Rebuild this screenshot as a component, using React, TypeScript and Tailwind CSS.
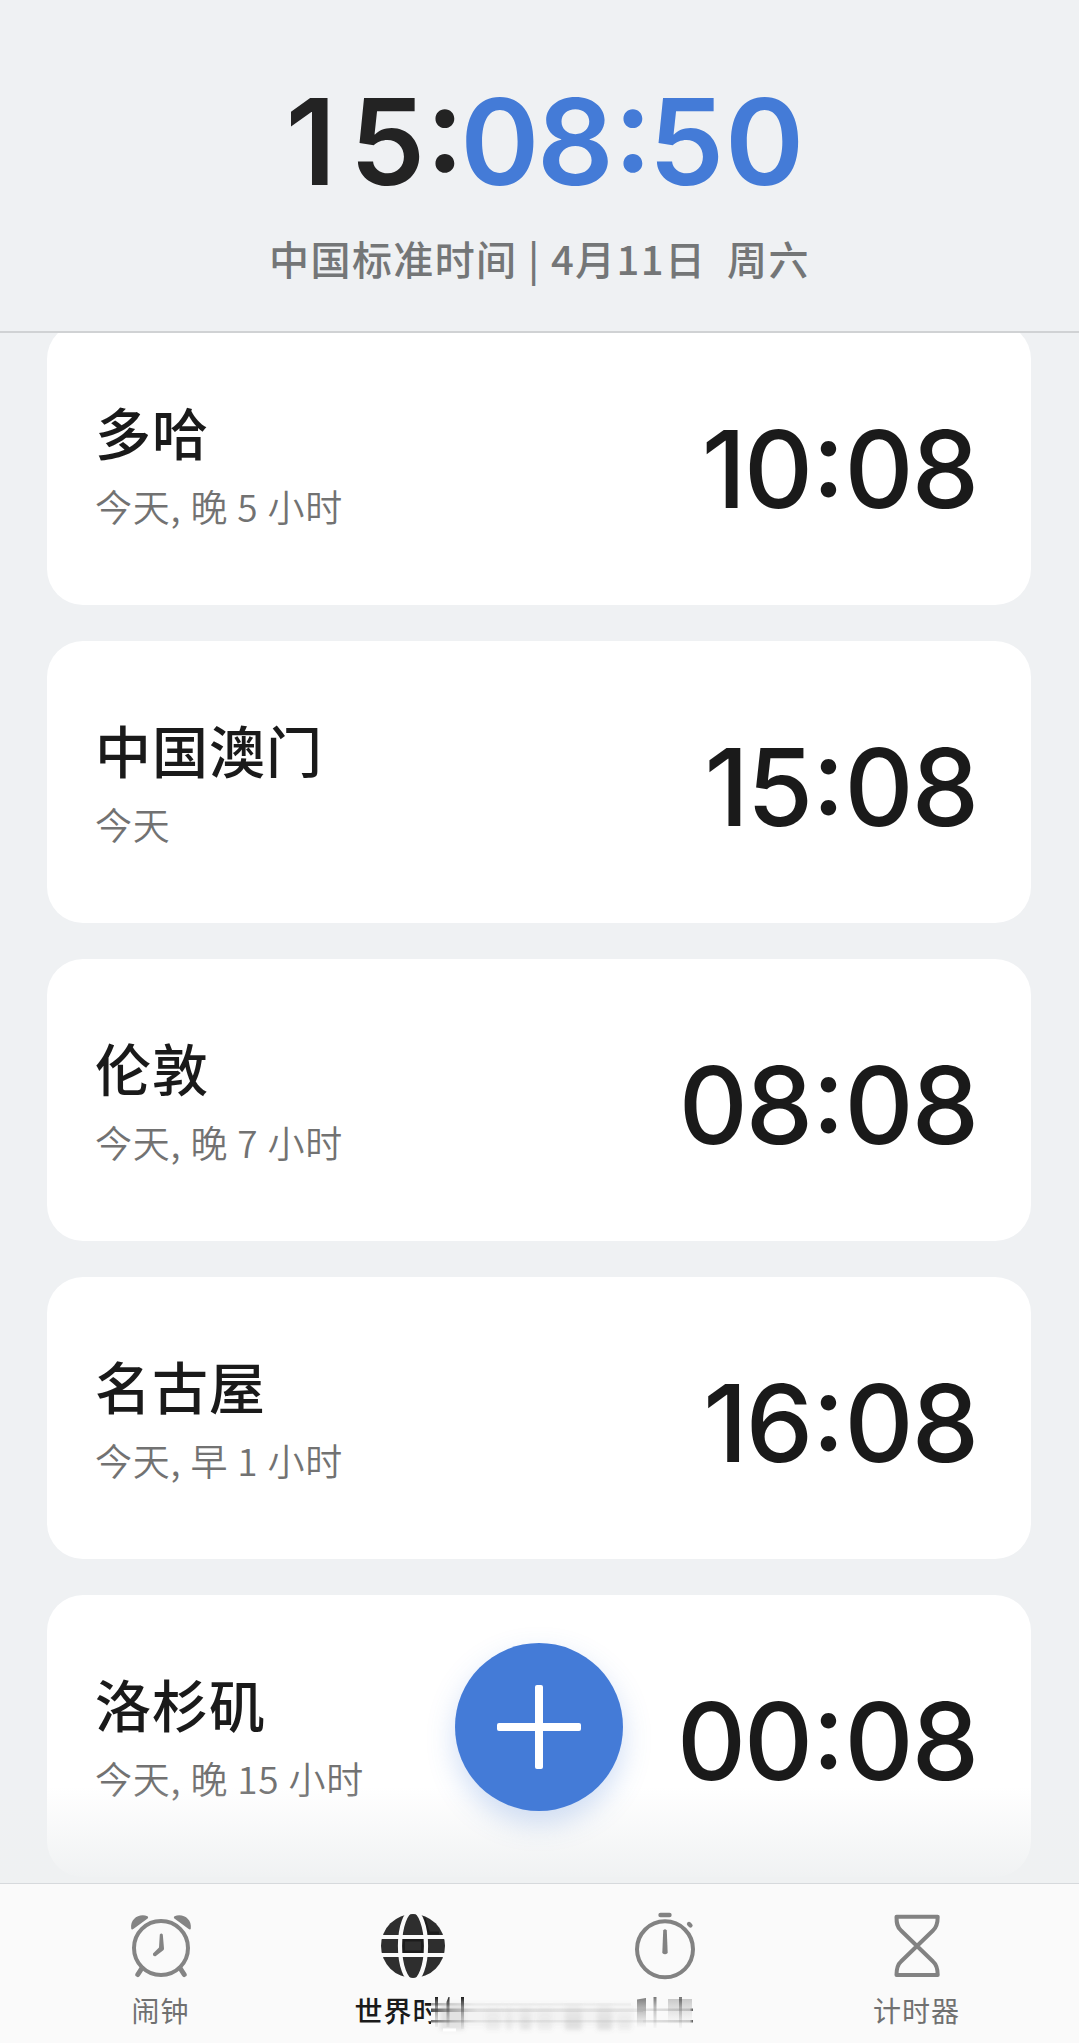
import React from 'react';

interface City {
  name: string;
  offset: string;
  time: string;
}

const CITIES: City[] = [
  { name: '多哈', offset: '今天, 晚 5 小时', time: '10:08' },
  { name: '中国澳门', offset: '今天', time: '15:08' },
  { name: '伦敦', offset: '今天, 晚 7 小时', time: '08:08' },
  { name: '名古屋', offset: '今天, 早 1 小时', time: '16:08' },
  { name: '洛杉矶', offset: '今天, 晚 15 小时', time: '00:08' },
];

function LiveClock({ value }: { value: string }) {
  return (
    <div className="flex pr-[5px] font-[Inter] text-[120px] leading-[120px] font-semibold">
      {value.split('').map((char, idx) => (
        <span
          key={idx}
          className={`text-center [font-feature-settings:'case'] ${char === ':' ? 'w-[34.5px]' : 'w-[76.7px]'} ${idx < 3 ? 'text-[#232323]' : 'text-[#447bd7]'}`}
        >
          {char}
        </span>
      ))}
    </div>
  );
}

function CityCard({ city }: { city: City }) {
  const [hour, minute] = city.time.split(':');
  return (
    <li className="flex h-[282px] shrink-0 items-center justify-between rounded-[36px] bg-white pr-[54px] pl-[48px]">
      <div className="flex flex-col pt-[1px]">
        <h2 className="text-[56px] leading-[72px] font-medium tracking-[1px] text-[#1a1a1a]">{city.name}</h2>
        <p className="mt-[11px] text-[37px] leading-[56px] font-[350] tracking-[0.8px] text-[#727272]">{city.offset}</p>
      </div>
      <div className="flex items-center pt-[10px] font-[Inter] text-[107px] leading-[110px] font-medium text-[#1a1a1a]">
        <span className="tracking-[-2px]">{hour}</span>
        <span className="ml-[1px] [font-feature-settings:'case']">:</span>
        <span className="tracking-[-2px]">{minute}</span>
      </div>
    </li>
  );
}

function AlarmIcon() {
  return (
    <svg width="72" height="72" viewBox="0 0 72 72" fill="none" stroke="#848484" strokeLinecap="round">
      <circle cx="36" cy="38" r="27" strokeWidth="4" />
      <path d="M34.800 24.500Q36.300 22.500 37.800 24.500L39 38.500Q39 39.800 38 40.600L30.500 46.200Q27.600 46.600 28 43.500L34 37.500Z" fill="#848484" stroke="none" />
      <path d="M17 58 12.800 64.500M55 58 59.200 64.500" strokeWidth="5" />
      <path d="M6.200 18.500C5 9 14 3 22.500 6.200 23.600 7 23.200 8.200 22.300 8.700L9 18.600C7.500 19.800 6.400 20 6.200 18.500ZM65.800 18.500C67 9 58 3 49.500 6.200 48.400 7 48.800 8.200 49.700 8.700L63 18.600C64.500 19.800 65.600 20 65.800 18.500Z" fill="#848484" stroke="none" />
    </svg>
  );
}

function GlobeIcon() {
  return (
    <svg width="72" height="72" viewBox="0 0 72 72" fill="none">
      <circle cx="36" cy="36" r="32" fill="#2e2e2e" />
      <rect x="26.500" y="30" width="19" height="12" stroke="#1c1c1c" strokeWidth="3" />
      <path d="M47 8 51.500 23 62 23" stroke="#1c1c1c" strokeWidth="3" />
      <path d="M3 27H69M3 45H69" stroke="#fafafa" strokeWidth="4" />
      <ellipse cx="36" cy="36" rx="13" ry="35" stroke="#fafafa" strokeWidth="4.200" />
    </svg>
  );
}

function StopwatchIcon() {
  return (
    <svg width="72" height="72" viewBox="0 0 72 72" fill="none" stroke="#828282" strokeLinecap="round">
      <circle cx="36" cy="39.300" r="28" strokeWidth="4" />
      <path d="M31.500 5H40.500" strokeWidth="4.400" />
      <path d="M60 14 61.500 15.500" strokeWidth="4.200" />
      <path d="M34.200 20.500Q36 18.200 37.800 20.500L38.700 43Q36 45.500 33.300 43Z" fill="#828282" stroke="none" />
    </svg>
  );
}

function HourglassIcon() {
  return (
    <svg width="72" height="72" viewBox="0 0 72 72" fill="none" stroke="#828282" strokeWidth="4" strokeLinejoin="round">
      <path d="M15.500 6.800H56.700C56.700 13 56 17 52 20.500L20 51.500C16 55 15.500 59 15.500 65H56.700C56.700 59 56 55 52 51.500L20 20.500C16 17 15.500 13 15.500 6.800Z" />
    </svg>
  );
}

// Smudge lying over the middle tab labels
function LabelSmudge() {
  return (
    <svg className="absolute top-[112px] left-[430px]" width="266" height="40" viewBox="0 0 266 40" fill="none">
      <defs>
        <linearGradient id="streak" x1="0" x2="1" y1="0" y2="0">
          <stop offset="0" stopColor="#222" stopOpacity="0.8" />
          <stop offset="0.1" stopColor="#444" stopOpacity="0.35" />
          <stop offset="0.22" stopColor="#666" stopOpacity="0.14" />
          <stop offset="1" stopColor="#888" stopOpacity="0.14" />
        </linearGradient>
        <linearGradient id="drip" x1="0" x2="0" y1="0" y2="1">
          <stop offset="0" stopColor="#111" stopOpacity="0.95" />
          <stop offset="0.35" stopColor="#333" stopOpacity="0.5" />
          <stop offset="1" stopColor="#555" stopOpacity="0.05" />
        </linearGradient>
        <linearGradient id="block" x1="0" x2="0" y1="0" y2="1">
          <stop offset="0" stopColor="#555" stopOpacity="0.75" />
          <stop offset="1" stopColor="#999" stopOpacity="0" />
        </linearGradient>
        <linearGradient id="tail" x1="0" x2="1" y1="0" y2="0">
          <stop offset="0" stopColor="#888" stopOpacity="0.2" />
          <stop offset="0.93" stopColor="#777" stopOpacity="0.35" />
          <stop offset="1" stopColor="#333" stopOpacity="0.85" />
        </linearGradient>
        <linearGradient id="column" x1="0" x2="0" y1="0" y2="1">
          <stop offset="0" stopColor="#777" stopOpacity="0.2" />
          <stop offset="1" stopColor="#777" stopOpacity="1" />
        </linearGradient>
        <filter id="soft" x="-5%" y="-20%" width="110%" height="140%">
          <feGaussianBlur stdDeviation="2" />
        </filter>
      </defs>
      <path d="M1 0H266V40H1Z" fill="#fafafa" />
      <g filter="url(#soft)">
        <rect x="10" y="8" width="24" height="26" fill="#777" opacity="0.18" />
        <rect x="34" y="8" width="170" height="22" fill="#777" opacity="0.05" />
        <rect x="56" y="10" width="14" height="24" fill="url(#column)" opacity="0.1" />
        <rect x="76" y="10" width="6" height="24" fill="url(#column)" opacity="0.12" />
        <rect x="90" y="10" width="11" height="24" fill="url(#column)" opacity="0.16" />
        <rect x="108" y="10" width="14" height="24" fill="url(#column)" opacity="0.1" />
        <rect x="135" y="8" width="17" height="26" fill="url(#column)" opacity="0.2" />
        <rect x="167" y="8" width="15" height="26" fill="url(#column)" opacity="0.2" />
        <rect x="188" y="16" width="13" height="18" fill="url(#column)" opacity="0.1" />
      </g>
      <rect x="1" y="7" width="200" height="2.500" fill="url(#streak)" opacity="0.5" />
      <rect x="1" y="12.500" width="212" height="3.500" fill="url(#streak)" />
      <rect x="1" y="24" width="212" height="2.500" fill="url(#streak)" opacity="0.8" />
      <rect x="5" y="1" width="3" height="30" fill="url(#drip)" />
      <path d="M18.500 1 16.500 6V31H19.500V1Z" fill="url(#drip)" />
      <rect x="31" y="1" width="3" height="32" fill="url(#drip)" />
      <rect x="13" y="32.500" width="13" height="3" fill="#fff" />
      <path d="M207 3.500 216 2V32H207Z" fill="url(#block)" />
      <rect x="223.500" y="1" width="3" height="31" fill="url(#drip)" opacity="0.6" />
      <rect x="238" y="3" width="24" height="26" fill="url(#block)" opacity="0.4" />
      <rect x="249" y="1" width="3" height="31" fill="url(#drip)" opacity="0.6" />
      <rect x="213" y="12.500" width="50" height="2.500" fill="url(#tail)" />
      <rect x="213" y="24" width="50" height="2.500" fill="url(#tail)" />
    </svg>
  );
}

const TABS = [
  { label: '闹钟', icon: AlarmIcon, active: false },
  { label: '世界时钟', icon: GlobeIcon, active: true },
  { label: '秒表', icon: StopwatchIcon, active: false },
  { label: '计时器', icon: HourglassIcon, active: false },
];

export default function App() {
  return (
    <div className="flex h-[2043px] w-[1079px] flex-col overflow-hidden bg-[#eff1f3] font-['Noto_Sans_CJK_SC',sans-serif]">
      <header className="flex h-[333px] shrink-0 flex-col items-center border-b-2 border-[#d0d2d4] pt-[82px]">
        <LiveClock value="15:08:50" />
        <p className="mt-[27px] text-[40px] leading-[58px] font-[450] tracking-[1.4px] whitespace-pre text-[#747677]">中国标准时间 | 4月11日  周六</p>
      </header>

      <main className="relative flex-1 overflow-hidden">
        <ul className="-mt-[10px] flex flex-col gap-[36px] pr-[48px] pl-[47px]">
          {CITIES.map((city) => (
            <CityCard key={city.name} city={city} />
          ))}
        </ul>
        <div className="pointer-events-none absolute inset-x-0 bottom-0 h-[96px] bg-linear-to-b from-[#eff1f2]/0 to-[#eff1f2]" />
        <button aria-label="添加" className="absolute bottom-[72px] left-[455px] flex size-[168px] items-center justify-center rounded-full bg-[#447bd7] shadow-[0_12px_28px_rgba(68,123,215,0.25)]">
          <svg width="84" height="84" viewBox="0 0 84 84" fill="#fff">
            <rect x="38" y="0" width="8" height="84" rx="2" />
            <rect x="0" y="38" width="84" height="8" rx="2" />
          </svg>
        </button>
      </main>

      <nav className="relative flex h-[160px] shrink-0 justify-center border-t border-[#d6d9dc] bg-[#fafafa] pt-[26px] pr-[2px]">
        {TABS.map(({ label, icon: Icon, active }) => (
          <div key={label} className="flex w-[252px] flex-col items-center gap-[8px]">
            <Icon />
            <span className={`text-[28px] leading-[40px] tracking-[1px] ${active ? 'font-medium text-[#1a1a1a]' : 'text-[#707070]'}`}>{label}</span>
          </div>
        ))}
        <LabelSmudge />
      </nav>
    </div>
  );
}
